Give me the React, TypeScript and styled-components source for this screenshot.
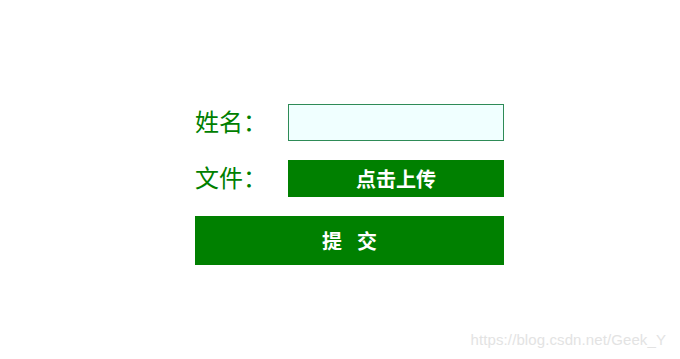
import React from "react";
import styled, { createGlobalStyle } from "styled-components";

const Global = createGlobalStyle`
  html, body { margin: 0; padding: 0; background: #fff; }
  body { font-family: "Noto Sans CJK SC", "Noto Sans", sans-serif; }
`;

const Page = styled.div`
  position: relative;
  width: 680px;
  height: 359px;
  overflow: hidden;
`;

const Form = styled.form`
  display: flex;
  flex-direction: column;
  width: 309px;
  margin-left: 195px;
  padding-top: 104px;
`;

const Row = styled.div<{ $mb: number }>`
  display: flex;
  align-items: center;
  height: 37px;
  margin-bottom: ${(p) => p.$mb}px;
`;

const Label = styled.label`
  width: 93px;
  flex: none;
  color: #008000;
  font-size: 24px;
  line-height: 37px;
  margin-top: -4px;
`;

const Input = styled.input`
  box-sizing: border-box;
  width: 216px;
  height: 37px;
  border: 1px solid #2e8b57;
  background: #f0ffff;
  outline: none;
  margin: 0;
  padding: 0 6px;
`;

const GreenButton = styled.button<{ $h: number; $size: number }>`
  box-sizing: border-box;
  border: none;
  margin: 0;
  padding: 0;
  background: #008000;
  color: #fff;
  font-family: "Noto Sans CJK SC", sans-serif;
  font-weight: bold;
  font-size: ${(p) => p.$size}px;
  height: ${(p) => p.$h}px;
  display: flex;
  align-items: center;
  justify-content: center;
  cursor: pointer;
`;

const UploadButton = styled(GreenButton)`
  width: 216px;
`;

const SubmitButton = styled(GreenButton)`
  width: 309px;
  gap: 15px;
`;

const Watermark = styled.div`
  position: absolute;
  right: 14px;
  bottom: 11px;
  font-family: "Liberation Sans", Arial, sans-serif;
  font-size: 15px;
  color: #e3e3e3;
  letter-spacing: 0.1px;
`;

export default function App() {
  return (
    <Page>
      <Global />
      <Form onSubmit={(e) => e.preventDefault()}>
        <Row $mb={19}>
          <Label>姓名：</Label>
          <Input type="text" />
        </Row>
        <Row $mb={19}>
          <Label>文件：</Label>
          <UploadButton type="button" $h={37} $size={20}>
            点击上传
          </UploadButton>
        </Row>
        <SubmitButton type="submit" $h={49} $size={20}>
          <span>提</span>
          <span>交</span>
        </SubmitButton>
      </Form>
      <Watermark>https://blog.csdn.net/Geek_Y</Watermark>
    </Page>
  );
}
